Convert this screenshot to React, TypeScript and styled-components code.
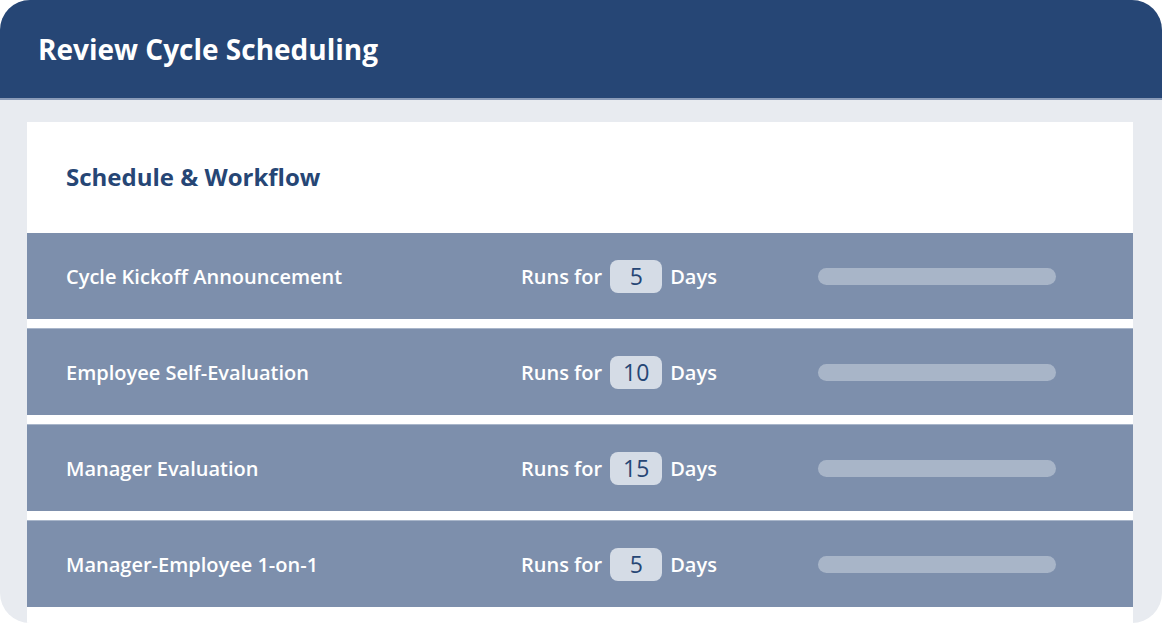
import styled, { createGlobalStyle } from 'styled-components'

const GlobalStyle = createGlobalStyle`
  body {
    margin: 0;
    background: #ffffff;
    font-family: 'Open Sans', 'Noto Sans', sans-serif;
  }
`

interface Stage {
  name: string
  days: number
}

const stages: Stage[] = [
  { name: 'Cycle Kickoff Announcement', days: 5 },
  { name: 'Employee Self-Evaluation', days: 10 },
  { name: 'Manager Evaluation', days: 15 },
  { name: 'Manager-Employee 1-on-1', days: 5 },
]

const Frame = styled.div`
  width: 1162px;
  height: 623px;
  background: #e8ebf0;
  border-radius: 30px;
  overflow: hidden;
  display: flex;
  flex-direction: column;
`

const Header = styled.header`
  height: 100px;
  flex-shrink: 0;
  display: flex;
  align-items: center;
  padding-left: 38px;
  box-sizing: border-box;
  background: #264675;
  border-bottom: 2px solid #8a9bb8;
`

const Title = styled.h1`
  margin: 0;
  font-size: 28px;
  font-weight: 700;
  color: #ffffff;
`

const Content = styled.main`
  flex: 1;
  padding: 22px 29px 0 27px;
  display: flex;
`

const Card = styled.section`
  flex: 1;
  background: #ffffff;
  display: flex;
  flex-direction: column;
`

const CardHead = styled.div`
  height: 111px;
  flex-shrink: 0;
  display: flex;
  align-items: center;
  padding-left: 39px;
  padding-bottom: 2px;
  box-sizing: border-box;
`

const CardTitle = styled.h2`
  margin: 0;
  font-size: 24px;
  font-weight: 700;
  color: #264675;
`

const Rows = styled.div`
  display: flex;
  flex-direction: column;
  gap: 9px;
`

const Row = styled.div`
  height: 86px;
  flex-shrink: 0;
  box-sizing: border-box;
  display: grid;
  grid-template-columns: 455px 297px 238px;
  align-items: center;
  padding-left: 39px;
  background: #7d8fac;
  & + & {
    border-top: 1px solid #a9b6ca;
    height: 87px;
  }
`

const Label = styled.span`
  font-size: 20px;
  font-weight: 600;
  color: #ffffff;
`

const Duration = styled.div`
  display: flex;
  align-items: center;
  gap: 8px;
  font-size: 20px;
  font-weight: 600;
  color: #ffffff;
`

const Badge = styled.span`
  width: 52px;
  height: 33px;
  border-radius: 8px;
  background: #d5dce6;
  color: #264675;
  font-size: 23px;
  font-weight: 500;
  display: flex;
  align-items: center;
  justify-content: center;
`

const Bar = styled.div`
  height: 17px;
  border-radius: 9px;
  background: #a8b5c8;
`

export default function App() {
  return (
    <>
      <GlobalStyle />
      <Frame>
        <Header>
          <Title>Review Cycle Scheduling</Title>
        </Header>
        <Content>
          <Card>
            <CardHead>
              <CardTitle>Schedule &amp; Workflow</CardTitle>
            </CardHead>
            <Rows>
              {stages.map((s) => (
                <Row key={s.name}>
                  <Label>{s.name}</Label>
                  <Duration>
                    Runs for <Badge>{s.days}</Badge> Days
                  </Duration>
                  <Bar />
                </Row>
              ))}
            </Rows>
          </Card>
        </Content>
      </Frame>
    </>
  )
}
